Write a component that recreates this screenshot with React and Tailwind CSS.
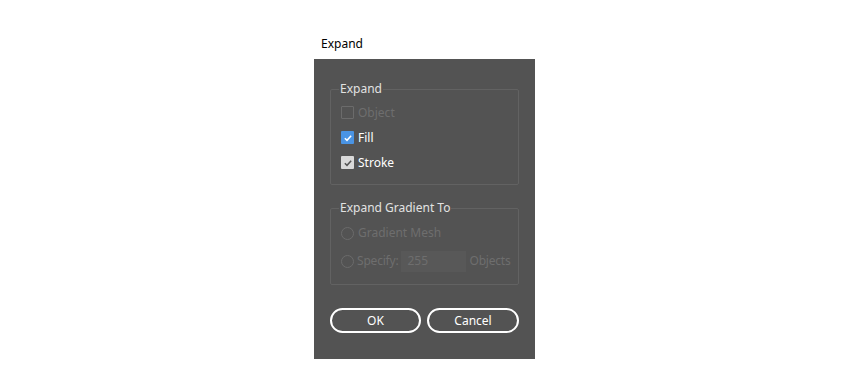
const Check = ({ color }) => (
  <svg viewBox="0 0 12 12" className="w-[10px] h-[10px]">
    <path d="M2.2 6.3 L4.8 8.8 L9.8 3.4" fill="none" stroke={color} strokeWidth="1.8" />
  </svg>
);

const CheckRow = ({ label, state }) => {
  let box;
  if (state === "disabled") {
    box = <span className="w-[13px] h-[13px] border border-[#6b6b6b] rounded-[1px]" />;
  } else if (state === "blue") {
    box = (
      <span className="w-[13px] h-[13px] bg-[#4a94e4] rounded-[1px] flex items-center justify-center">
        <Check color="#ffffff" />
      </span>
    );
  } else {
    box = (
      <span className="w-[13px] h-[13px] bg-[#d9d9d9] rounded-[1px] flex items-center justify-center">
        <Check color="#535353" />
      </span>
    );
  }
  return (
    <div className="h-[25px] flex items-center gap-[4px]">
      {box}
      <span className={state === "disabled" ? "text-[#6e6e6e]" : "text-white"}>{label}</span>
    </div>
  );
};

const Radio = () => <span className="w-[13px] h-[13px] rounded-full border border-[#6b6b6b]" />;

export default function App() {
  return (
    <div
      className="w-[850px] h-[391px] bg-white text-[12px] leading-[16px]"
      style={{ fontFamily: '"Noto Sans", "Open Sans", sans-serif' }}
    >
      <div className="pt-[36px] pl-[321px] text-black">Expand</div>
      <div className="ml-[314px] mt-[7px] w-[221px] h-[300px] bg-[#535353] px-[16px] pt-[22px]">
        <fieldset className="border border-[#626262] rounded-[2px] pl-[10px] pb-[9px]">
          <legend className="-ml-[2px] px-[1px] text-[#e2e2e2]">Expand</legend>
          <div className="pt-[3px]">
            <CheckRow label="Object" state="disabled" />
            <CheckRow label="Fill" state="blue" />
            <CheckRow label="Stroke" state="gray" />
          </div>
        </fieldset>
        <fieldset className="mt-[15px] border border-[#626262] rounded-[2px] pl-[10px] pb-[11px]">
          <legend className="-ml-[2px] px-[1px] text-[#e2e2e2]">Expand Gradient To</legend>
          <div className="pt-[5px] text-[#6e6e6e]">
            <div className="h-[24px] flex items-center gap-[4px]">
              <Radio />
              <span>Gradient Mesh</span>
            </div>
            <div className="mt-[4px] h-[24px] flex items-center gap-[3px]">
              <Radio />
              <span className="tracking-[-0.2px]">Specify:</span>
              <span className="w-[65px] h-[21px] bg-[#585858] flex items-center pl-[6px]">255</span>
              <span className="tracking-[-0.2px]">Objects</span>
            </div>
          </div>
        </fieldset>
        <div className="mt-[23px] flex gap-[6px] text-white">
          <button className="w-[91px] h-[25px] rounded-full border-2 border-white flex items-center justify-center">
            OK
          </button>
          <button className="w-[92px] h-[25px] rounded-full border-2 border-white flex items-center justify-center">
            Cancel
          </button>
        </div>
      </div>
    </div>
  );
}
